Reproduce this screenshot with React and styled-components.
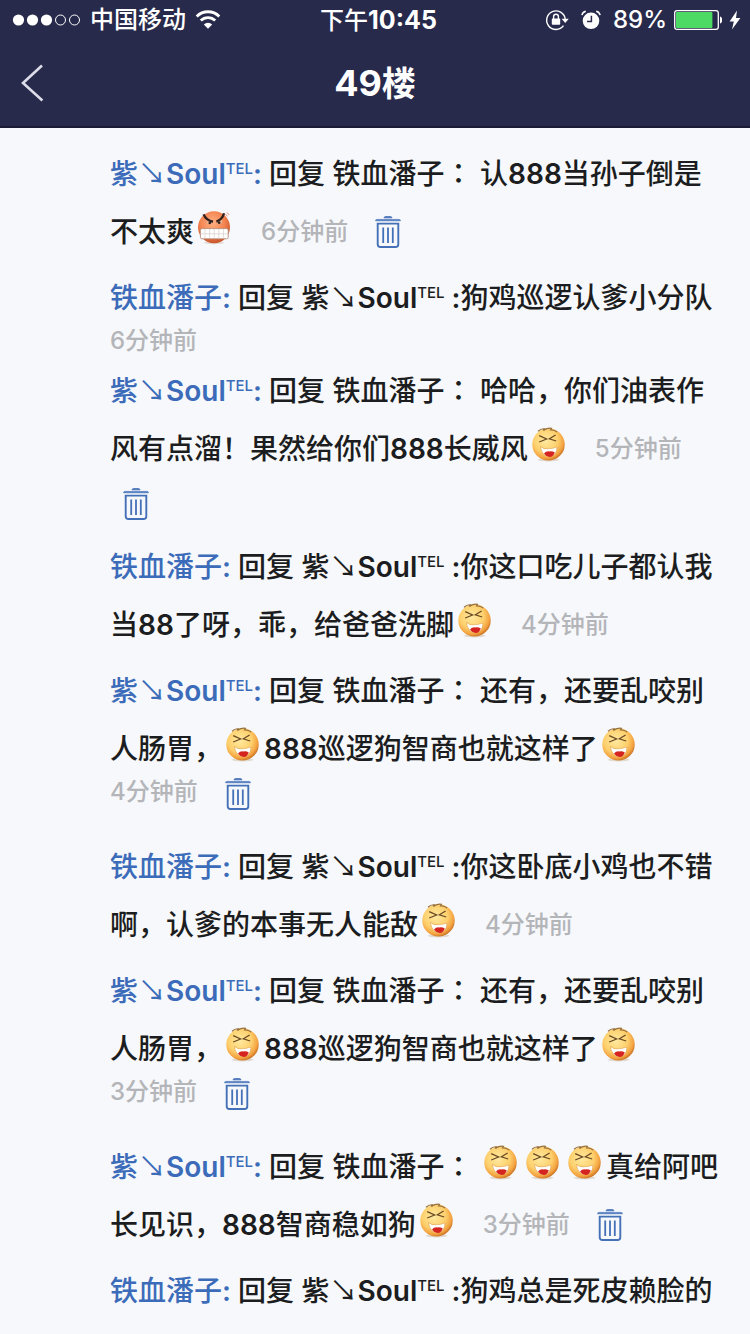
import React, { useId } from 'react';
import styled, { createGlobalStyle } from 'styled-components';

const GlobalStyle = createGlobalStyle`
  * {
    box-sizing: border-box;
  }

  body {
    margin: 0;
    background-color: #f7f8fb;
    font-family: Inter, "Noto Sans CJK SC", sans-serif;
  }
`;

const Page = styled.div`
  min-height: 100vh;
  color: #1c1d20;
`;

const Header = styled.header`
  background-color: #272a4b;
  border-bottom: 2px solid #1a1c36;
  color: white;
`;

const StatusBar = styled.div`
  display: grid;
  grid-template-columns: 1fr auto 1fr;
  align-items: center;
  height: 40px;
  padding: 0 9px 0 12px;
  font-size: 24px;
  font-weight: 500;
  line-height: 38px;
`;

const StatusGroup = styled.div`
  display: flex;
  align-items: center;
  justify-content: ${(props) => (props.$end ? 'flex-end' : 'flex-start')};
  gap: ${(props) => (props.$end ? 12 : 8)}px;
`;

const BatteryGroup = styled.div`
  display: flex;
  align-items: center;
  gap: 7px;
`;

const Clock = styled.time`
  padding-left: 4px;
`;

const ClockDigits = styled.span`
  font-size: 25px;
  font-weight: 700;
`;

const NavBar = styled.div`
  display: grid;
  grid-template-columns: 1fr auto 1fr;
  align-items: center;
  height: 86px;
  padding: 0 20px;
`;

const BackButton = styled.button`
  display: flex;
  justify-self: start;
  padding: 0;
  border: none;
  background: none;
  color: #dcdde8;
  cursor: pointer;
`;

const Title = styled.h1`
  margin: 0;
  font-size: 36px;
  font-weight: 700;
  line-height: 44px;
`;

const TitleUnit = styled.span`
  font-size: 34px;
`;

const ReplyList = styled.ul`
  display: flex;
  flex-direction: column;
  gap: 8px;
  margin: 0;
  padding: 17px 28px 17px 110px;
  list-style: none;
`;

const ReplyText = styled.p`
  margin: 0;
  font-size: 28px;
  font-weight: 500;
  line-height: 58px;
`;

const NameLink = styled.a`
  color: #3c6cb9;
  text-decoration: none;
`;

const Latin = styled.span`
  font-weight: 600;
`;

const Arrow = styled.span`
  font-family: "Noto Sans CJK SC", sans-serif;
  font-weight: 400;
  line-height: 1;
`;

const Tel = styled.sup`
  font-size: 15px;
  font-weight: 500;
  line-height: 1;
  vertical-align: 10px;
`;

// the TC face keeps the full-width colon in the middle of its box
const WideColon = styled.span`
  font-family: "Noto Sans CJK TC", sans-serif;
  line-height: 1;
`;

const NoWrap = styled.span`
  white-space: nowrap;
`;

const EmojiIcon = styled.svg`
  width: 42px;
  height: 36px;
  vertical-align: -4px;
`;

const Time = styled.time`
  color: #b3b5b9;
  font-size: 24px;
  font-weight: 500;
  line-height: 28px;
`;

const InlineMeta = styled.span`
  display: inline-flex;
  align-items: center;
  height: 8px;
  margin-left: 25px;
  vertical-align: 2px;
`;

const Footer = styled.div`
  display: flex;
  align-items: ${(props) => (props.$centered ? 'center' : 'flex-start')};
  height: ${(props) => (props.$tall ? 52 : 27)}px;
`;

const DeleteButton = styled.button`
  display: flex;
  margin: 0;
  padding: 0 13px;
  border: none;
  background: none;
  color: #4470b8;
  cursor: pointer;

  ${Time} + & {
    padding-left: 27px;
  }
`;

const SignalIcon = () => (
  <svg width="70" height="14" viewBox="0 0 70 14" aria-hidden="true">
    <circle cx="6.5" cy="7" r="5.6" fill="#fff" />
    <circle cx="20.5" cy="7" r="5.6" fill="#fff" />
    <circle cx="34.5" cy="7" r="5.6" fill="#fff" />
    <circle cx="48.5" cy="7" r="5" fill="none" stroke="#fff" />
    <circle cx="62.5" cy="7" r="5" fill="none" stroke="#fff" />
  </svg>
);

const WifiIcon = () => (
  <svg width="28" height="20" viewBox="0 0 28 20" fill="none" stroke="#fff" strokeWidth="2.8" aria-hidden="true">
    <path d="M2.7 6.4a16 16 0 0 1 22.6 0" />
    <path d="M6.8 10.6a10.2 10.2 0 0 1 14.4 0" />
    <path d="M14 18.8l-4.2-4.3a6 6 0 0 1 8.4 0z" fill="#fff" stroke="none" />
  </svg>
);

const LockIcon = () => (
  <svg width="24" height="22" viewBox="0 0 24 22" fill="none" aria-hidden="true">
    <path d="M18.5 16.7A9.3 9.3 0 1 1 20.2 10" stroke="#fff" strokeWidth="1.4" />
    <path d="M16.6 9.8h7.2l-3.6 4.2z" fill="#fff" />
    <rect x="6.8" y="9.6" width="8.4" height="6.2" rx="0.8" fill="#fff" />
    <path d="M8.6 10V7.6a2.4 2.4 0 0 1 4.8 0V10" stroke="#fff" strokeWidth="1.4" />
  </svg>
);

const AlarmIcon = () => (
  <svg width="20" height="20" viewBox="0 0 20 20" fill="none" aria-hidden="true">
    <circle cx="10" cy="10.8" r="8.3" fill="#fff" />
    <path d="M10.4 5.8v5.6H6" stroke="#272a4b" strokeWidth="1.5" />
    <path d="M0.9 5.2A5 5 0 0 1 4.8 1.2M19.1 5.2a5 5 0 0 0-3.9-4" stroke="#fff" strokeWidth="1.5" />
  </svg>
);

const BatteryIcon = () => (
  <svg width="48" height="20" viewBox="0 0 48 20" fill="none" aria-hidden="true">
    <rect x="0.7" y="0.7" width="43.6" height="18.6" rx="2.4" stroke="#fff" strokeWidth="1.3" />
    <rect x="2" y="2" width="36.4" height="16" rx="1" fill="#4cd964" />
    <path d="M46 6.6c3 .8 3 6 0 6.8z" fill="#fff" />
  </svg>
);

const BoltIcon = () => (
  <svg width="12" height="20" viewBox="0 0 12 20" aria-hidden="true">
    <path d="M8 0.6L0.6 11.4h4.2L3 19.4 11.4 8H7z" fill="#fff" />
  </svg>
);

const BackIcon = () => (
  <svg width="24" height="38" viewBox="0 0 24 38" fill="none" stroke="currentColor" strokeWidth="2.6" aria-hidden="true">
    <path d="M22 1.5L3 19l19.4 17.5" />
  </svg>
);

const TrashIcon = () => (
  <svg width="26" height="32" viewBox="0 0 26 32" fill="none" stroke="currentColor" aria-hidden="true">
    <path d="M9 1.8Q9.3 0.6 10.6 0.6h4.8q1.3 0 1.6 1.2z" fill="currentColor" strokeWidth="0.8" />
    <path d="M0.5 4.8q0-1.4 1.6-1.4h21.8q1.6 0 1.6 1.4z" fill="currentColor" strokeWidth="0.6" />
    <path d="M2.7 7.6h20.6v20.6q0 2.8-2.8 2.8H5.5q-2.8 0-2.8-2.8z" strokeWidth="1.9" />
    <path d="M8.2 11.4v15.6M13 11.4v15.6M17.8 11.4v15.6" strokeWidth="1.8" />
  </svg>
);

const LaughEmoji = () => {
  const id = useId();
  return (
    <EmojiIcon viewBox="0 0 42 36" fill="none" role="img" aria-label="大笑">
      <defs>
        <radialGradient id={id} cx="0.42" cy="0.38" r="0.62">
          <stop offset="0" stopColor="#ffeaa0" />
          <stop offset="0.6" stopColor="#fdcf6c" />
          <stop offset="0.88" stopColor="#f3a23f" />
          <stop offset="1" stopColor="#cf7a2a" />
        </radialGradient>
      </defs>
      <ellipse cx="20.6" cy="32.8" rx="11" ry="1.6" fill="#e0dad2" />
      <circle cx="20.5" cy="17.4" r="16.2" fill={`url(#${id})`} />
      <path d="M10 4.2q3-2.8 6.4-2.4l-1 1.6q4.6-2.8 8-2l-.8 1.4q4-.2 6.6 2.4" stroke="#96703f" strokeWidth="1.2" />
      <path d="M11.2 8.6l7.4 3.4-7.4 3M27.6 8l-6.2 3.8 6.8 2.2" stroke="#6b4a22" strokeWidth="1.3" />
      <path d="M12.4 19.4q3.2 3 7.6 2.4 5-.2 9-1.8-.4 8.8-6.8 9.8-8.4-.2-9.8-10.4z" fill="#fff" stroke="#d9923c" strokeWidth="0.5" />
      <path d="M16 26.4q2-2.4 5.4-2 3-.4 5.4 1-1.4 4.2-5 4.6-3.8-.4-5.8-3.6z" fill="#d5241f" />
    </EmojiIcon>
  );
};

const AngryEmoji = () => {
  const id = useId();
  return (
    <EmojiIcon viewBox="0 0 42 36" fill="none" role="img" aria-label="愤怒">
      <defs>
        <radialGradient id={id} cx="0.45" cy="0.36" r="0.64">
          <stop offset="0" stopColor="#ffb184" />
          <stop offset="0.6" stopColor="#f38350" />
          <stop offset="1" stopColor="#c9552c" />
        </radialGradient>
      </defs>
      <ellipse cx="20" cy="32.8" rx="10" ry="1.5" fill="#e0dad2" />
      <circle cx="20" cy="17.2" r="16" fill={`url(#${id})`} />
      <circle cx="15.4" cy="11.4" r="2.6" fill="#e9b18f" />
      <circle cx="25.6" cy="11.4" r="2.6" fill="#e9b18f" />
      <path d="M9.6 4.4Q12 10.4 19 11.8M30 3.2Q28.4 9.4 22.4 11.6" stroke="#33201c" strokeWidth="2.4" />
      <circle cx="15.8" cy="13" r="1.3" fill="#33201c" />
      <circle cx="25.2" cy="12.8" r="1.3" fill="#33201c" />
      <path d="M31.4 4.4l2.2 1.8M33 2.4l2 2.4" stroke="#e98e72" strokeWidth="1" />
      <rect x="6.4" y="18.6" width="27.8" height="10.2" rx="1.6" fill="#fff" stroke="#b08472" strokeWidth="0.8" />
      <path d="M6.4 23.8h27.8M11 19v9.6M15.6 19v9.6M20.2 19v9.6M24.8 19v9.6M29.4 19v9.6" stroke="#d8cdc8" strokeWidth="0.7" />
    </EmojiIcon>
  );
};

const SoulName = () => (
  <>
    紫<Arrow>↘</Arrow><Latin>Soul</Latin><Tel>TEL</Tel>
  </>
);

const emojis = { '[laugh]': LaughEmoji, '[angry]': AngryEmoji };

const renderBody = (text) =>
  text.split(/(\[\w+\]|\d+)/).map((part, index) => {
    const Emoji = emojis[part];
    if (Emoji) return <Emoji key={index} />;
    if (/^\d+$/.test(part)) return <Latin key={index}>{part}</Latin>;
    return part;
  });

// time and remove say where the part sits: beside the text or below it
const replies = [
  { from: 'soul', text: '认888当孙子倒是不太爽[angry]', ago: '6分钟前', time: 'inline', remove: 'inline' },
  { from: 'tiexue', text: '狗鸡巡逻认爹小分队', ago: '6分钟前', time: 'below' },
  { from: 'soul', text: '哈哈，你们油表作风有点溜！果然给你们888长威风[laugh]', ago: '5分钟前', time: 'inline', remove: 'below' },
  { from: 'tiexue', text: '你这口吃儿子都认我当88了呀，乖，给爸爸洗脚[laugh]', ago: '4分钟前', time: 'inline' },
  { from: 'soul', text: '还有，还要乱咬别人肠胃，[laugh]888巡逻狗智商也就这样了[laugh]', ago: '4分钟前', time: 'below', remove: 'below' },
  { from: 'tiexue', text: '你这卧底小鸡也不错啊，认爹的本事无人能敌[laugh]', ago: '4分钟前', time: 'inline' },
  { from: 'soul', text: '还有，还要乱咬别人肠胃，[laugh]888巡逻狗智商也就这样了[laugh]', ago: '3分钟前', time: 'below', remove: 'below' },
  { from: 'soul', text: '[laugh][laugh][laugh]真给阿吧长见识，888智商稳如狗[laugh]', ago: '3分钟前', time: 'inline', remove: 'inline' },
  { from: 'tiexue', text: '狗鸡总是死皮赖脸的' }
];

const Remove = () => (
  <DeleteButton type="button" aria-label="删除">
    <TrashIcon />
  </DeleteButton>
);

const Reply = ({ from, text, ago, time, remove }) => (
  <li>
    <ReplyText>
      {from === 'soul' ? (
        <NoWrap>
          <NameLink href="#soul"><SoulName /><Latin>: </Latin></NameLink>回复 铁血潘子<WideColon>：</WideColon>
        </NoWrap>
      ) : (
        <NoWrap>
          <NameLink href="#tiexue">铁血潘子<Latin>: </Latin></NameLink>回复 <SoulName /><Latin> :</Latin>
        </NoWrap>
      )}
      {from === 'soul' && ' '}
      {renderBody(text)}
      {time === 'inline' && (
        <InlineMeta>
          <Time>{ago}</Time>
          {remove === 'inline' && <Remove />}
        </InlineMeta>
      )}
    </ReplyText>
    {(time === 'below' || remove === 'below') && (
      <Footer $tall={remove === 'below'} $centered={time === 'inline'}>
        {time === 'below' && <Time>{ago}</Time>}
        {remove === 'below' && <Remove />}
      </Footer>
    )}
  </li>
);

const App = () => (
  <Page>
    <GlobalStyle />
    <Header>
      <StatusBar>
        <StatusGroup>
          <SignalIcon />
          <span>中国移动</span>
          <WifiIcon />
        </StatusGroup>
        <Clock>下午<ClockDigits>10:45</ClockDigits></Clock>
        <StatusGroup $end>
          <LockIcon />
          <AlarmIcon />
          <BatteryGroup>
            <span>89%</span>
            <BatteryIcon />
            <BoltIcon />
          </BatteryGroup>
        </StatusGroup>
      </StatusBar>
      <NavBar>
        <BackButton type="button" aria-label="返回">
          <BackIcon />
        </BackButton>
        <Title>49<TitleUnit>楼</TitleUnit></Title>
      </NavBar>
    </Header>
    <main>
      <ReplyList>
        {replies.map((reply, index) => (
          <Reply key={index} {...reply} />
        ))}
      </ReplyList>
    </main>
  </Page>
);

export default App;
